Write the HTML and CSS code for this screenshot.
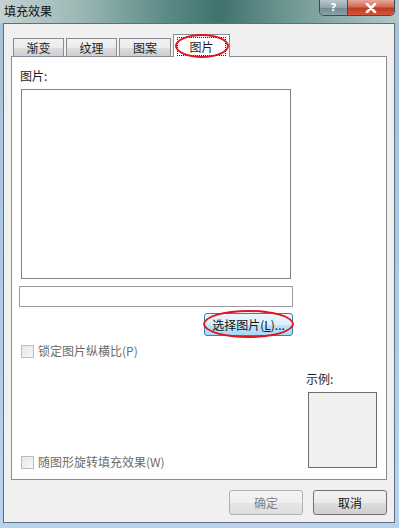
FILE: index.html
```html
<!DOCTYPE html>
<html lang="zh-CN">
<head>
    <meta charset="UTF-8">
    <title>填充效果</title>
    <link rel="stylesheet" href="styles.css">
</head>
<body>
    <div class="window">
        <div class="titlebar">
            <span class="title">填充效果</span>
            <div class="caption-buttons">
                <span class="cap-btn cap-help">?</span>
                <span class="cap-btn cap-close">
                    <svg width="12" height="10" viewBox="0 0 12 10"><path d="M2 1 L10 9 M10 1 L2 9" stroke="#fff" stroke-width="2.6" stroke-linecap="round"/></svg>
                </span>
            </div>
        </div>

        <div class="client">
            <div class="tabs">
                <div class="tab">渐变</div>
                <div class="tab">纹理</div>
                <div class="tab tab-wide">图案</div>
                <div class="tab tab-active">
                    <span class="focus-rect">图片</span>
                    <span class="mark mark-tab"></span>
                </div>
            </div>

            <div class="panel">
                <div class="label">图片:</div>
                <div class="picbox"></div>
                <div class="textbox"></div>
                <div class="btn-row">
                    <button class="btn btn-hot">选择图片(<u>L</u>)...</button>
                    <span class="mark mark-btn"></span>
                </div>

                <div class="lower">
                    <div class="lower-left">
                        <label class="check"><span class="box"></span>锁定图片纵横比(P)</label>
                        <label class="check"><span class="box"></span>随图形旋转填充效果(W)</label>
                    </div>
                    <div class="lower-right">
                        <div class="label">示例:</div>
                        <div class="sample"></div>
                    </div>
                </div>
            </div>

            <div class="actions">
                <button class="btn btn-dialog" disabled>确定</button>
                <button class="btn btn-dialog">取消</button>
            </div>
        </div>
    </div>
</body>
</html>
```

FILE: styles.css
```css
body {
    margin: 0;
    padding: 0;
    font-family: "Noto Sans CJK SC", "Noto Sans", sans-serif;
    font-size: 12px;
    color: #1e1e1e;
}

.window {
    width: 399px;
    height: 528px;
    overflow: hidden;
    background: linear-gradient(180deg, #a7c2d6 0, #a9c7e6 40%, #b9d3ee 100%);
}

.titlebar {
    height: 23px;
    display: flex;
    justify-content: space-between;
    align-items: flex-start;
    background: linear-gradient(90deg, #c3d2d2 0%, #9cb8b5 20%, #5a8a86 42%, #3f716d 55%, #6e9793 72%, #b3c7ca 100%);
}

.title {
    padding: 3px 0 0 4px;
    line-height: 16px;
    color: #111;
}

.caption-buttons {
    display: flex;
    margin-right: 4px;
    border: 1px solid #3e4c58;
    border-top: none;
    border-radius: 0 0 5px 5px;
    overflow: hidden;
}

.cap-btn {
    height: 15px;
    display: flex;
    align-items: center;
    justify-content: center;
}

.cap-help {
    width: 27px;
    background: linear-gradient(180deg, #b7c8cb 0, #8ea5aa 50%, #6f8a90 51%, #89a3a7 100%);
    color: #fff;
    font-weight: bold;
    font-family: "DejaVu Sans", sans-serif;
    font-size: 11px;
    border-right: 1px solid #3e4c58;
}

.cap-close {
    width: 46px;
    background: linear-gradient(180deg, #e9a99b 0, #d36a55 45%, #c2391f 55%, #d0573a 100%);
}

.client {
    margin-left: 3px;
    width: 392px;
    height: 500px;
    box-sizing: border-box;
    border: 1px solid #5f6e7c;
    background: #f0f0f0;
    padding: 10px 7px 0 7px;
}

.tabs {
    display: flex;
    align-items: flex-end;
    height: 22px;
    padding-left: 2px;
    gap: 2px;
}

.tab {
    width: 51px;
    height: 18px;
    box-sizing: border-box;
    border: 1px solid #898c95;
    border-bottom: none;
    background: linear-gradient(180deg, #f2f2f2 0, #ebebeb 50%, #dddddd 51%, #cfcfcf 100%);
    text-align: center;
    line-height: 17px;
}

.tab-wide {
    width: 52px;
}

.tab-active {
    position: relative;
    z-index: 1;
    width: 57px;
    height: 23px;
    margin-bottom: -1px;
    margin-left: 0;
    background: #fff;
    padding-top: 2px;
    line-height: 16px;
}

.focus-rect {
    display: inline-block;
    padding: 0 11px;
    line-height: 17px;
    border: 1px dotted #222;
}

.mark {
    position: absolute;
    border: 2px solid #e01522;
    border-radius: 50%;
    pointer-events: none;
}

.mark-tab {
    left: 1px;
    top: -1px;
    width: 50px;
    height: 20px;
}

.panel {
    height: 424px;
    box-sizing: border-box;
    border: 1px solid #898c95;
    background: #fff;
    padding: 12px 8px 0 8px;
    display: flex;
    flex-direction: column;
}

.label {
    line-height: 14px;
    color: #1e1e1e;
}

.picbox {
    margin: 6px 0 0 1px;
    width: 270px;
    height: 190px;
    box-sizing: border-box;
    border: 1px solid #7f8389;
    background: #fff;
}

.textbox {
    margin: 7px 0 0 -1px;
    width: 274px;
    height: 21px;
    box-sizing: border-box;
    border: 1px solid #9a9da4;
    background: #fff;
}

.btn-row {
    position: relative;
    margin-top: 6px;
    height: 23px;
    width: 273px;
    display: flex;
    justify-content: flex-end;
}

.btn {
    font-family: inherit;
    font-size: 12px;
    color: #111;
    padding: 0;
    box-sizing: border-box;
    border: 1px solid #707070;
    border-radius: 3px;
    background: linear-gradient(180deg, #f2f2f2 0, #ebebeb 50%, #dddddd 51%, #cfcfcf 100%);
}

.btn u {
    text-decoration: underline;
}

.btn-hot {
    width: 89px;
    height: 23px;
    border-color: #3c7fb1;
    background: linear-gradient(180deg, #eaf6fd 0, #d9f0fc 50%, #bee6fd 51%, #a7d9f5 100%);
}

.mark-btn {
    right: -1px;
    top: -3px;
    width: 87px;
    height: 24px;
}

.lower {
    flex: 1;
    margin-top: 8px;
    display: flex;
}

.lower-left {
    flex: 1;
    display: flex;
    flex-direction: column;
    justify-content: space-between;
    padding: 0 0 10px 1px;
}

.check {
    display: flex;
    align-items: center;
    gap: 4px;
    line-height: 14px;
    color: #6d6d6d;
}

.box {
    width: 13px;
    height: 13px;
    box-sizing: border-box;
    border: 1px solid #bcbcbc;
    background: linear-gradient(135deg, #e6e6e6 0, #f8f8f8 100%);
}

.lower-right {
    width: 71px;
    margin-right: 1px;
}

.lower-right .label {
    margin-top: 28px;
}

.sample {
    margin: 6px 0 0 2px;
    width: 69px;
    height: 76px;
    box-sizing: border-box;
    border: 1px solid #6d6d6d;
    background: #f0f0f0;
}

.actions {
    margin-top: 10px;
    display: flex;
    justify-content: flex-end;
    gap: 10px;
}

.btn-dialog {
    width: 74px;
    height: 25px;
}

.btn-dialog:disabled {
    color: #838383;
    border-color: #adb2b5;
    background: linear-gradient(180deg, #f4f4f4 0, #efefef 50%, #e6e6e6 51%, #dedede 100%);
}
```
